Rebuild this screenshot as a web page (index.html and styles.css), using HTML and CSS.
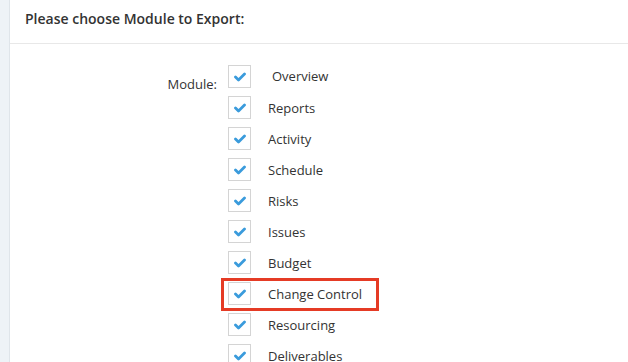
FILE: index.html
```html
<!DOCTYPE html>
<html lang="en">
<head>
    <meta charset="UTF-8">
    <meta name="viewport" content="width=device-width, initial-scale=1.0">
    <title>Export</title>
    <link rel="stylesheet" href="styles.css">
</head>
<body>
    <div class="page">
        <div class="side"></div>
        <div class="panel">
            <div class="panel-head">Please choose Module to Export:</div>
            <div class="panel-body">
                <div class="field">
                    <div class="field-label">Module:</div>
                    <div class="options">
                        <label class="option"><span class="box"><svg width="12" height="10" viewBox="0 0 12 10"><path d="M1.5 5 L4.5 8 L10.5 2" /></svg></span><span class="text first">Overview</span></label>
                        <label class="option"><span class="box"><svg width="12" height="10" viewBox="0 0 12 10"><path d="M1.5 5 L4.5 8 L10.5 2" /></svg></span><span class="text">Reports</span></label>
                        <label class="option"><span class="box"><svg width="12" height="10" viewBox="0 0 12 10"><path d="M1.5 5 L4.5 8 L10.5 2" /></svg></span><span class="text">Activity</span></label>
                        <label class="option"><span class="box"><svg width="12" height="10" viewBox="0 0 12 10"><path d="M1.5 5 L4.5 8 L10.5 2" /></svg></span><span class="text">Schedule</span></label>
                        <label class="option"><span class="box"><svg width="12" height="10" viewBox="0 0 12 10"><path d="M1.5 5 L4.5 8 L10.5 2" /></svg></span><span class="text">Risks</span></label>
                        <label class="option"><span class="box"><svg width="12" height="10" viewBox="0 0 12 10"><path d="M1.5 5 L4.5 8 L10.5 2" /></svg></span><span class="text">Issues</span></label>
                        <label class="option"><span class="box"><svg width="12" height="10" viewBox="0 0 12 10"><path d="M1.5 5 L4.5 8 L10.5 2" /></svg></span><span class="text">Budget</span></label>
                        <label class="option highlight"><span class="box"><svg width="12" height="10" viewBox="0 0 12 10"><path d="M1.5 5 L4.5 8 L10.5 2" /></svg></span><span class="text">Change Control</span></label>
                        <label class="option"><span class="box"><svg width="12" height="10" viewBox="0 0 12 10"><path d="M1.5 5 L4.5 8 L10.5 2" /></svg></span><span class="text">Resourcing</span></label>
                        <label class="option"><span class="box"><svg width="12" height="10" viewBox="0 0 12 10"><path d="M1.5 5 L4.5 8 L10.5 2" /></svg></span><span class="text">Deliverables</span></label>
                    </div>
                </div>
            </div>
        </div>
    </div>
</body>
</html>
```

FILE: styles.css
```css
html, body {
    margin: 0;
    height: 100%;
    overflow: hidden;
}
body {
    font-family: "Open Sans", "Liberation Sans", sans-serif;
    font-size: 13px;
    color: #333;
    background-color: #fff;
}
.page {
    display: flex;
    height: 100%;
}
.side {
    width: 9px;
    flex: none;
    background-color: #eef3f7;
    border-right: 1px solid #dfe5ea;
}
.panel {
    flex: 1;
}
.panel-head {
    padding: 9px 15px 14px;
    line-height: 20px;
    font-size: 14px;
    font-weight: 600;
    border-bottom: 1px solid #e8e8e8;
}
.panel-body {
    padding-top: 21px;
}
.field {
    display: flex;
}
.field-label {
    width: 207px;
    margin-right: 11px;
    padding-top: 10px;
    line-height: 18px;
    text-align: right;
}
.options {
    display: flex;
    flex-direction: column;
    gap: 8px;
}
.option {
    position: relative;
    display: flex;
    align-items: center;
    height: 23px;
}
.box {
    width: 21px;
    height: 21px;
    border: 1px solid #d4d4d4;
    display: flex;
    align-items: center;
    justify-content: center;
    background: #fff;
}
.box path {
    fill: none;
    stroke: #3a9bdc;
    stroke-width: 2.8;
    stroke-linecap: round;
    stroke-linejoin: round;
}
.text {
    margin-left: 17px;
    line-height: 18px;
}
.text.first {
    margin-left: 21px;
    margin-top: -2px;
}
.highlight::after {
    content: "";
    position: absolute;
    left: -7px;
    top: -4px;
    width: 152px;
    height: 27px;
    border: 3px solid #e53b25;
}
```
